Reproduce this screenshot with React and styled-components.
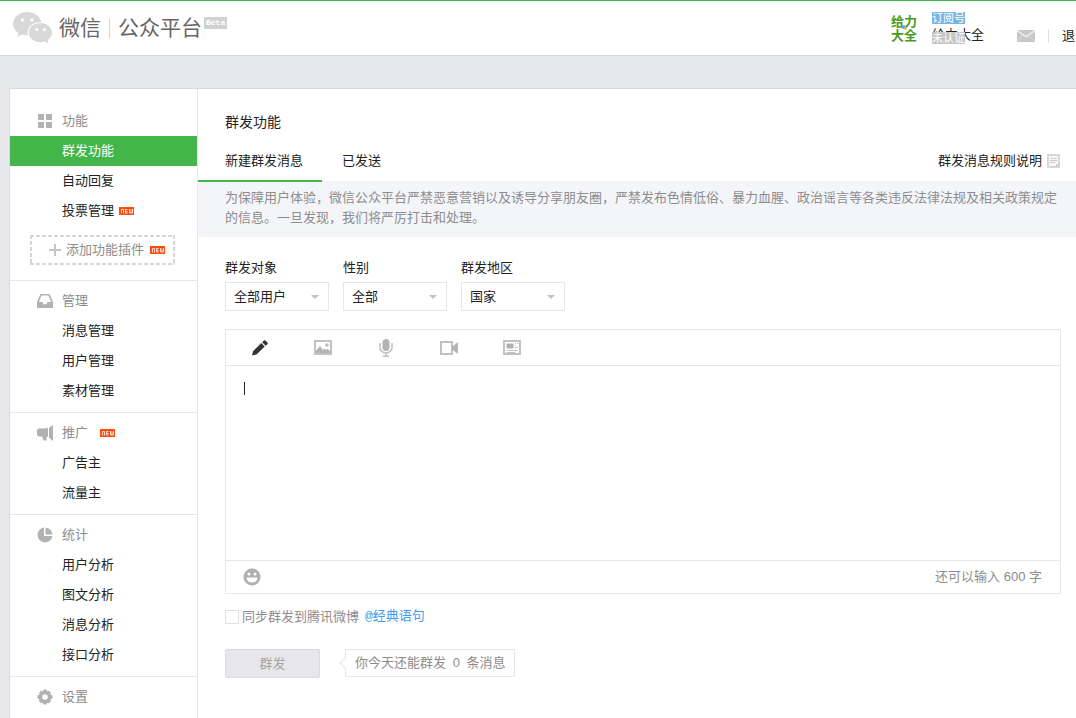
import React from "react";
import styled, { createGlobalStyle } from "styled-components";

const GlobalStyle = createGlobalStyle`
  *, *::before, *::after { box-sizing: border-box; }
  body {
    margin: 0;
    background: #e7e8eb;
    color: #222;
    font: 13px/20px "Liberation Sans", "Noto Sans CJK SC", sans-serif;
  }
  a { color: inherit; text-decoration: none; }
  h1, h2, h3, p, ul, dl, dt, dd { margin: 0; padding: 0; font-weight: normal; }
  ul { list-style: none; }
  button, select, textarea, input { font: inherit; color: inherit; margin: 0; }
  svg { display: block; flex: none; }
`;

const Page = styled.div`
  display: flex;
  flex-direction: column;
  min-height: 100vh;
`;

/* ---------- header ---------- */

const Header = styled.header`
  display: flex;
  align-items: center;
  height: 56px;
  padding: 0 1px 0 13px;
  background: #fff;
  border-top: 1px solid #44b549;
  border-bottom: 1px solid #d9dadc;
`;

const Brand = styled.a`
  display: flex;
  align-items: center;
  font-size: 21px;
  line-height: 30px;
  color: #666;
`;

const BrandName = styled.span`
  margin-left: 6px;
`;

const Rule = styled.span`
  width: 1px;
  height: ${(p) => p.$height}px;
  margin: 0 ${(p) => p.$gap}px;
  background: ${(p) => p.$color};
`;

const Beta = styled.sup`
  align-self: flex-start;
  margin: 5px 0 0 2px;
  padding: 0 2px;
  background: #d2d2d2;
  color: #fff;
  font: bold 8px/12px "Liberation Mono", monospace;
`;

const Account = styled.div`
  display: flex;
  align-items: center;
  height: 54px;
  margin-left: auto;
`;

const Avatar = styled.a`
  position: relative;
  width: 28px;
  margin-right: 13px;
  color: #4a9a22;
  font: bold 13px/14px "Noto Sans CJK SC", sans-serif;
`;

const AvatarMark = styled.svg`
  position: absolute;
  left: 10px;
  top: 10px;
`;

const Identity = styled.div`
  position: relative;
  align-self: flex-start;
  padding-top: 11px;
`;

const Badge = styled.span`
  display: block;
  width: 33px;
  background: ${(p) => p.$color};
  color: #fff;
  font-size: 11px;
  line-height: 12px;
  text-align: center;
`;

const AccountName = styled.a`
  display: block;
  margin-top: 1px;
`;

const OverBadge = styled(Badge)`
  position: absolute;
  left: 0;
  top: 31px;
`;

const Tools = styled.div`
  display: flex;
  align-items: center;
  align-self: flex-start;
  height: 20px;
  margin: 25px 0 0 33px;
`;

/* ---------- panel and side menu ---------- */

const Panel = styled.div`
  display: flex;
  flex: 1;
  margin: 32px 0 0 9px;
  background: #fff;
  border: 1px solid #d9dadc;
  border-width: 1px 0 0 1px;
`;

const Side = styled.nav`
  flex: none;
  width: 188px;
  border-right: 1px solid #e7e7eb;
`;

const Group = styled.section`
  padding: 5px 0 6px;
  border-top: 1px solid #e7e7eb;
  &:first-child {
    padding: 16px 0 15px;
    border-top-color: transparent;
  }
`;

const GroupTitle = styled.h3`
  display: flex;
  align-items: center;
  height: 30px;
  padding-left: 27px;
  font-size: 13px;
  color: #8d8d8d;
`;

const GroupIcon = styled.svg`
  width: 16px;
  height: 16px;
  margin-right: 9px;
  fill: #b2b2b2;
`;

const Item = styled.a`
  display: flex;
  align-items: center;
  height: 30px;
  padding-left: 52px;
  background: ${(p) => (p.$active ? "#44b549" : "transparent")};
  color: ${(p) => (p.$active ? "#fff" : "#222")};
`;

const dash = (dir) =>
  `repeating-linear-gradient(${dir}, #d6d6d6 0 4px, transparent 4px 6px)`;

const AddPlugin = styled.button`
  display: flex;
  align-items: center;
  width: 145px;
  height: 30px;
  margin: 9px 0 0 20px;
  padding: 0 0 0 19px;
  border: 0;
  background:
    ${dash("to right")} top / 100% 2px no-repeat,
    ${dash("to right")} bottom / 100% 2px no-repeat,
    ${dash("to bottom")} left / 2px 100% no-repeat,
    ${dash("to bottom")} right / 2px 100% no-repeat;
  color: #8d8d8d;
  svg:first-child { margin-right: 5px; }
`;

const NewSvg = styled.svg`
  margin-left: ${(p) => p.$gap}px;
`;

/* ---------- main column ---------- */

const Main = styled.main`
  flex: 1;
  min-width: 0;
  padding-top: 23px;
`;

const Title = styled.h2`
  padding-left: 27px;
  font-size: 14px;
  line-height: 20px;
`;

const Tabs = styled.div`
  display: flex;
  height: 40px;
  margin-top: 10px;
  padding-right: 16px;
  border-bottom: 1px solid #f4f5f9;
`;

const Tab = styled.a`
  height: 40px;
  padding: ${(p) => (p.$active ? "0 19px 0 27px" : "0 20px")};
  line-height: 38px;
  border-bottom: 2px solid ${(p) => (p.$active ? "#44b549" : "transparent")};
`;

const RulesLink = styled.a`
  display: flex;
  align-items: center;
  height: 38px;
  margin-left: auto;
  svg { margin-left: 5px; }
`;

const Notice = styled.p`
  padding: 6px 15px 9px 27px;
  background: #f4f5f9;
  color: #8d8d8d;
`;

const Form = styled.form`
  padding: 21px 15px 24px 27px;
`;

const Filters = styled.div`
  display: flex;
  gap: 14px;
`;

const Field = styled.label`
  display: block;
  width: 104px;
`;

const SelectBox = styled.span`
  display: flex;
  align-items: center;
  height: 29px;
  margin-top: 4px;
  border: 1px solid #e7e7eb;
  &::after {
    content: "";
    flex: none;
    margin: 0 9px 0 -18px;
    border: 4px solid transparent;
    border-top-color: #c2c2c2;
    border-bottom: 0;
    pointer-events: none;
  }
`;

const Select = styled.select`
  appearance: none;
  flex: 1;
  min-width: 0;
  height: 27px;
  padding: 0 18px 0 8px;
  border: 0;
  background: transparent;
  outline: none;
`;

const Editor = styled.div`
  margin-top: 18px;
  border: 1px solid #e7e7eb;
`;

const Toolbar = styled.div`
  display: flex;
  align-items: center;
  gap: 39px;
  height: 36px;
  padding-left: 22px;
  border-bottom: 1px solid #e7e7eb;
`;

const IconButton = styled.button`
  display: flex;
  align-items: center;
  justify-content: center;
  width: 24px;
  height: 24px;
  padding: 0;
  border: 0;
  background: transparent;
`;

const TextArea = styled.div`
  display: flex;
  height: 194px;
  padding: 16px 18px;
`;

const Caret = styled.i`
  width: 1px;
  height: 13px;
  background: #222;
`;

const Input = styled.textarea`
  flex: 1;
  padding: 0;
  border: 0;
  outline: none;
  resize: none;
  background: transparent;
  caret-color: transparent;
`;

const EditorFoot = styled.div`
  display: flex;
  align-items: center;
  justify-content: space-between;
  height: 33px;
  padding: 0 18px 0 14px;
  border-top: 1px solid #e7e7eb;
  color: #8d8d8d;
`;

const SyncRow = styled.div`
  display: flex;
  align-items: center;
  height: 20px;
  margin-top: 13px;
  color: #8d8d8d;
`;

const SyncLabel = styled.label`
  display: flex;
  align-items: center;
`;

const Check = styled.input`
  appearance: none;
  width: 14px;
  height: 14px;
  margin-right: 3px;
  border: 1px solid #e0e1e5;
  background: #fff;
`;

const SyncLink = styled.a`
  margin-left: 6px;
  color: #459ae9;
  font-family: "Liberation Mono", "Noto Sans CJK SC", monospace;
`;

const SubmitRow = styled.div`
  display: flex;
  align-items: flex-start;
  gap: 25px;
  margin-top: 22px;
`;

const Submit = styled.button`
  width: 95px;
  height: 29px;
  padding: 0;
  border: 1px solid #dadbe0;
  border-radius: 2px;
  background: #e7e7eb;
  color: #a3a3a3;
`;

const Bubble = styled.p`
  position: relative;
  padding: 3px 9px;
  border: 1px solid #e7e7eb;
  color: #8d8d8d;
  &::before {
    content: "";
    position: absolute;
    left: -5px;
    top: 9px;
    width: 8px;
    height: 8px;
    border: 1px solid #e7e7eb;
    border-width: 0 0 1px 1px;
    background: #fff;
    transform: rotate(45deg);
  }
`;

const Count = styled.span`
  margin: 0 3px;
`;

/* ---------- drawings ---------- */

const WeChatLogo = () => (
  <svg width="40" height="32" viewBox="0 0 40 32" aria-hidden="true">
    <path
      fill="#d8d8d8"
      d="M14 0C6.200 0 0 5.200 0 11.800c0 3.700 2 7 5.200 9.200L4.200 25l4.800-2.400c1.700.5 3.300.8 5 .8h1.200c-.4-1-.5-2-.5-3 0-6 5.700-10.400 12.600-10.400h1C27 4.200 21 0 14 0z"
    />
    <path
      fill="#d8d8d8"
      d="M27.500 11c-6.600 0-11.700 4.300-11.700 9.600 0 5.400 5.100 9.700 11.700 9.700 1.400 0 2.800-.3 4.200-.7l4 2.100-1.100-3.500c2.700-1.900 4.400-4.600 4.400-7.600C39 15.300 33.800 11 27.500 11z"
    />
    <g fill="#fff">
      <circle cx="9.300" cy="8" r="1.800" />
      <circle cx="19" cy="8" r="1.800" />
      <circle cx="23.700" cy="17.500" r="1.500" />
      <circle cx="31.500" cy="17.500" r="1.500" />
    </g>
  </svg>
);

const MailIcon = () => (
  <svg width="18" height="12" viewBox="0 0 18 12" aria-hidden="true">
    <path fill="#c8c8c8" d="M0 0h18v12H0z" />
    <path fill="none" stroke="#f2f2f2" strokeWidth="1.300" d="M0 .5l9 6.300L18 .5" />
    <path fill="none" stroke="#d8d8d8" d="M0 11.500l6-5.500M18 11.500L12 6" />
  </svg>
);

const NewTag = ({ gap }) => (
  <NewSvg $gap={gap} width="15" height="8" viewBox="0 0 15 8" role="img" aria-label="new">
    <path fill="#ff4d12" d="M0 0h15v8H0z" />
    <path
      fill="none"
      stroke="#ffd9ca"
      d="M2.500 6.500v-4h2v4M8.500 2.500h-2v3.500h2M6.500 4.500h2M10.500 2v4h3V2M12 2.500v3.500"
    />
  </NewSvg>
);

const icons = {
  grid: <path d="M1 1h6v6H1zM9 1h6v6H9zM1 9h6v6H1zM9 9h6v6H9z" />,
  tray: (
    <path
      fillRule="evenodd"
      d="M3.500 1h9L16 9v6H0V9zM4.500 2.500L2 9h3.500l1 2.200h3L10.500 9H14l-2.500-6.500z"
    />
  ),
  horn: (
    <path d="M0 5.500Q0 3.500 2 3.500H7Q9.500 3.500 11 2.500V12Q10 11.500 9.500 12V15.500H6.500L5 11.500H2Q0 11.500 0 9.500zM12 3L15 .500h1v15h-1L12 12.500z" />
  ),
  pie: <path d="M7 .600V9h8.400A7.500 7.500 0 1 1 7 .600zM8.500.500A7.500 7.500 0 0 1 15.500 7.500h-7z" />,
  gear: (
    <path
      fillRule="evenodd"
      d="M6.500.500h3l.6 1.800 1.800-.5 2.100 2.100-.6 1.900 2.100.8v3l-2 .7.600 1.900-2.200 2.100-1.800-.6-.6 1.800h-3l-.6-1.800-1.800.6L1.900 12.200l.6-1.900-2-.7v-3l2.100-.8-.6-1.900L4.100 1.800l1.800.5zM8 5.200a2.800 2.800 0 1 0 0 5.600 2.800 2.800 0 0 0 0-5.600z"
    />
  ),
};

const PencilIcon = () => (
  <svg width="16" height="16" viewBox="0 0 16 16" fill="#333" aria-hidden="true">
    <path d="M0 15.500l1-4.300L9.300 3.100l3.400 3.400-8.200 8zM10.200 2.200L11.800.600Q12.600 0 13.400.600l2 2q.800.800 0 1.600l-1.800 1.500z" />
  </svg>
);

const PictureIcon = () => (
  <svg width="18" height="15" viewBox="0 0 18 15" aria-hidden="true">
    <path fill="none" stroke="#c2c2c2" strokeWidth="2" d="M1 1h16v13H1z" />
    <path fill="#b5b5b5" d="M2 13v-2.500l4-4.500 3 4 1.500-1.500L12 10l1.500-1.500L16 11v2z" />
    <circle cx="13" cy="5" r="1.800" fill="#bdbdbd" />
  </svg>
);

const MicIcon = () => (
  <svg width="14" height="18" viewBox="0 0 14 18" aria-hidden="true">
    <rect x="3.500" y="0" width="7" height="12" rx="3.500" fill="#b4b4b4" />
    <path
      fill="none"
      stroke="#c0c0c0"
      strokeWidth="1.500"
      d="M1 4v4.500a6 5.500 0 0 0 12 0V4M7 14v3M4 17.200h6"
    />
  </svg>
);

const VideoIcon = () => (
  <svg width="19" height="14" viewBox="0 0 19 14" aria-hidden="true">
    <path fill="none" stroke="#c2c2c2" strokeWidth="2" d="M1 1h11v12H1z" />
    <path fill="#b5b5b5" d="M12 6L18 1v12L12 8.500z" />
  </svg>
);

const NewsIcon = () => (
  <svg width="18" height="15" viewBox="0 0 18 15" aria-hidden="true">
    <path fill="none" stroke="#c2c2c2" strokeWidth="2" d="M1 1h16v13H1z" />
    <path fill="#b0b0b0" d="M3.500 3.500h7v5h-7z" />
    <path fill="none" stroke="#c2c2c2" d="M12 3.500h1M14 3.500h1.500M12 5.500h1M12 7.500h3M3.500 10.500h11M3.500 12.500h9" />
  </svg>
);

const SmileIcon = () => (
  <svg width="18" height="18" viewBox="0 0 18 18" aria-hidden="true">
    <circle cx="9" cy="9" r="8.500" fill="#b0b0b0" />
    <g fill="#fff">
      <circle cx="6" cy="6" r="1.500" />
      <circle cx="12" cy="6" r="1.500" />
      <path d="M3.500 9.500h11Q14 14.500 9 14.500T3.500 9.500z" />
    </g>
  </svg>
);

const SheetIcon = () => (
  <svg width="13" height="14" viewBox="0 0 13 14" aria-hidden="true">
    <path fill="#f8f8f8" stroke="#d8d8d8" strokeWidth="2" d="M1 1h11v12H1z" />
    <path fill="none" stroke="#cacaca" d="M3 4.500h7M3 6.500h7M3 8.500h5" />
    <path fill="#d0d0d0" d="M9 13.500V10h3.500z" />
  </svg>
);

const PlusIcon = () => (
  <svg width="12" height="12" viewBox="0 0 12 12" aria-hidden="true">
    <path fill="none" stroke="#c4c4c4" strokeWidth="2" d="M6 0v12M0 6h12" />
  </svg>
);

/* ---------- data ---------- */

const menu = [
  {
    icon: "grid",
    title: "功能",
    items: [
      { text: "群发功能", active: true },
      { text: "自动回复" },
      { text: "投票管理", isNew: true },
    ],
    plugin: "添加功能插件",
  },
  {
    icon: "tray",
    title: "管理",
    items: [{ text: "消息管理" }, { text: "用户管理" }, { text: "素材管理" }],
  },
  { icon: "horn", title: "推广", isNew: true, items: [{ text: "广告主" }, { text: "流量主" }] },
  {
    icon: "pie",
    title: "统计",
    items: [
      { text: "用户分析" },
      { text: "图文分析" },
      { text: "消息分析" },
      { text: "接口分析" },
    ],
  },
  { icon: "gear", title: "设置", items: [] },
];

const filters = [
  { label: "群发对象", value: "全部用户" },
  { label: "性别", value: "全部" },
  { label: "群发地区", value: "国家" },
];

const tools = [
  { label: "文字", Icon: PencilIcon },
  { label: "图片", Icon: PictureIcon },
  { label: "语音", Icon: MicIcon },
  { label: "视频", Icon: VideoIcon },
  { label: "图文消息", Icon: NewsIcon },
];

export default function App() {
  return (
    <Page>
      <GlobalStyle />
      <Header>
        <Brand href="#">
          <WeChatLogo />
          <BrandName>微信</BrandName>
          <Rule $height={19} $gap={8} $color="#d5d5d5" />
          公众平台
          <Beta>Beta</Beta>
        </Brand>
        <Account>
          <Avatar href="#">
            给力
            <br />
            大全
            <AvatarMark width="7" height="7" viewBox="0 0 7 7" aria-hidden="true">
              <circle cx="2.500" cy="3" r="2" fill="#5aaee6" />
              <circle cx="4.500" cy="4.500" r="1.500" fill="#f5b04c" />
            </AvatarMark>
          </Avatar>
          <Identity>
            <Badge $color="#7ab6e4">订阅号</Badge>
            <AccountName href="#">给力大全</AccountName>
            <OverBadge $color="#c6c6c6">未认证</OverBadge>
          </Identity>
          <Tools>
            <a href="#" aria-label="通知">
              <MailIcon />
            </a>
            <Rule $height={14} $gap={13} $color="#e0e0e0" />
            <a href="#">退</a>
          </Tools>
        </Account>
      </Header>

      <Panel>
        <Side>
          {menu.map((group) => (
            <Group key={group.title}>
              <GroupTitle>
                <GroupIcon viewBox="0 0 16 16" aria-hidden="true">
                  {icons[group.icon]}
                </GroupIcon>
                {group.title}
                {group.isNew && <NewTag gap={12} />}
              </GroupTitle>
              {group.items.map((item) => (
                <Item key={item.text} href="#" $active={item.active}>
                  {item.text}
                  {item.isNew && <NewTag gap={5} />}
                </Item>
              ))}
              {group.plugin && (
                <AddPlugin type="button">
                  <PlusIcon />
                  {group.plugin}
                  <NewTag gap={6} />
                </AddPlugin>
              )}
            </Group>
          ))}
        </Side>

        <Main>
          <Title>群发功能</Title>
          <Tabs>
            <Tab href="#" $active>
              新建群发消息
            </Tab>
            <Tab href="#">已发送</Tab>
            <RulesLink href="#">
              群发消息规则说明
              <SheetIcon />
            </RulesLink>
          </Tabs>
          <Notice>
            为保障用户体验，微信公众平台严禁恶意营销以及诱导分享朋友圈，严禁发布色情低俗、暴力血腥、政治谣言等各类违反法律法规及相关政策规定的信息。一旦发现，我们将严厉打击和处理。
          </Notice>
          <Form onSubmit={(e) => e.preventDefault()}>
            <Filters>
              {filters.map((f) => (
                <Field key={f.label}>
                  {f.label}
                  <SelectBox>
                    <Select defaultValue={f.value}>
                      <option>{f.value}</option>
                    </Select>
                  </SelectBox>
                </Field>
              ))}
            </Filters>
            <Editor>
              <Toolbar>
                {tools.map(({ label, Icon }) => (
                  <IconButton key={label} type="button" aria-label={label}>
                    <Icon />
                  </IconButton>
                ))}
              </Toolbar>
              <TextArea>
                <Caret />
                <Input aria-label="消息内容" />
              </TextArea>
              <EditorFoot>
                <IconButton type="button" aria-label="表情">
                  <SmileIcon />
                </IconButton>
                <span>还可以输入 600 字</span>
              </EditorFoot>
            </Editor>
            <SyncRow>
              <SyncLabel>
                <Check type="checkbox" />
                同步群发到腾讯微博
              </SyncLabel>
              <SyncLink href="#">@经典语句</SyncLink>
            </SyncRow>
            <SubmitRow>
              <Submit type="submit" disabled>
                群发
              </Submit>
              <Bubble>
                你今天还能群发 <Count>0</Count> 条消息
              </Bubble>
            </SubmitRow>
          </Form>
        </Main>
      </Panel>
    </Page>
  );
}
